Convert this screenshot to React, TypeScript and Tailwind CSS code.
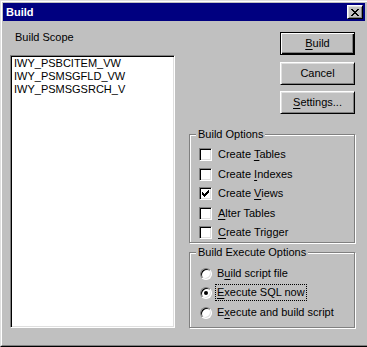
import React from 'react';

const sunken =
  'border border-t-[#808080] border-l-[#808080] border-b-white border-r-white shadow-[inset_1px_1px_0_#000,inset_-1px_-1px_0_#dfdfdf] bg-white';

const CheckMark = () => (
  <svg width="7" height="7" viewBox="0 0 7 7" shapeRendering="crispEdges">
    <path
      d="M6 0h1v1h-1zM5 1h2v1h-2zM0 2h1v1h-1zM4 2h3v1h-3zM0 3h2v1h-2zM3 3h3v1h-3zM0 4h5v1h-5zM1 5h3v1h-3zM2 6h1v1h-1z"
      fill="#000"
    />
  </svg>
);

const CloseGlyph = () => (
  <svg width="8" height="7" viewBox="0 0 8 7" shapeRendering="crispEdges">
    <path
      d="M0 0h2v1h-2zM6 0h2v1h-2zM1 1h2v1h-2zM5 1h2v1h-2zM2 2h4v1h-4zM3 3h2v1h-2zM2 4h4v1h-4zM1 5h2v1h-2zM5 5h2v1h-2zM0 6h2v1h-2zM6 6h2v1h-2z"
      fill="#000"
    />
  </svg>
);

// label with one underlined access key
const Acc = ({ pre = '', k, post = '' }: { pre?: string; k: string; post?: string }) => (
  <span className="whitespace-pre">
    {pre}
    <span className="underline underline-offset-[2px]">{k}</span>
    {post}
  </span>
);

const Button = ({ children, def = false, mt }: { children: React.ReactNode; def?: boolean; mt: string }) => (
  <div
    className={
      def
        ? `${mt} ml-[91px] w-[75px] h-[23px] flex items-center justify-center border border-black shadow-[inset_1px_1px_0_#fff,inset_-1px_-1px_0_#000,inset_-2px_-2px_0_#808080]`
        : `${mt} ml-[91px] w-[75px] h-[23px] flex items-center justify-center border border-t-white border-l-white border-b-black border-r-black shadow-[inset_1px_1px_0_#dfdfdf,inset_-1px_-1px_0_#808080]`
    }
  >
    {children}
  </div>
);

const checks = [
  { pre: 'Create ', k: 'T', post: 'ables', on: false, mt: 'mt-0' },
  { pre: 'Create ', k: 'I', post: 'ndexes', on: false, mt: 'mt-[7px]' },
  { pre: 'Create ', k: 'V', post: 'iews', on: true, mt: 'mt-[6px]' },
  { pre: '', k: 'A', post: 'lter Tables', on: false, mt: 'mt-[7px]' },
  { pre: '', k: 'C', post: 'reate Trigger', on: false, mt: 'mt-[6px]' },
];

const radios = [
  { pre: 'B', k: 'u', post: 'ild script file', on: false, mt: 'mt-0' },
  { pre: '', k: 'E', post: 'xecute SQL now', on: true, mt: 'mt-[6px]' },
  { pre: 'E', k: 'x', post: 'ecute and build script', on: false, mt: 'mt-[7px]' },
];

export default function App() {
  return (
    <div className="w-[367px] h-[347px] bg-[#c0c0c0] border-t border-l border-b border-t-[#dfdfdf] border-l-[#dfdfdf] border-b-black font-['Liberation_Sans',Arial,sans-serif] text-[11px] leading-[13px] text-black select-none">
      <div className="h-full flex flex-col border-t border-l border-b border-t-white border-l-white border-b-[#808080] pt-[1px] pl-[1px] pr-[2px]">
        {/* title bar */}
        <div className="h-[18px] bg-[#000080] flex items-center justify-between pl-[3px] pr-[2px]">
          <span className="text-white font-bold">Build</span>
          <div className="w-[16px] h-[14px] flex items-center justify-center bg-[#c0c0c0] border border-t-white border-l-white border-b-black border-r-black shadow-[inset_1px_1px_0_#dfdfdf,inset_-1px_-1px_0_#808080]">
            <CloseGlyph />
          </div>
        </div>

        <div className="flex">
          {/* build scope */}
          <div className="ml-[7px] w-[165px]">
            <div className="mt-[10px] pl-[5px]">Build Scope</div>
            <div className={`mt-[11px] h-[273px] pt-[1px] pl-[3px] ${sunken}`}>
              <div>IWY_PSBCITEM_VW</div>
              <div>IWY_PSMSGFLD_VW</div>
              <div>IWY_PSMSGSRCH_V</div>
            </div>
          </div>

          <div className="ml-[14px] w-[167px]">
            <Button def mt="mt-[11px]">
              <Acc k="B" post="uild" />
            </Button>
            <Button mt="mt-[7px]">Cancel</Button>
            <Button mt="mt-[6px]">
              <Acc k="S" post="ettings..." />
            </Button>

            <div className="relative mt-[20px] w-[166px] h-[109px] border border-[#808080] shadow-[inset_1px_1px_0_#fff,1px_1px_0_#fff] pt-[13px]">
              <span className="absolute top-[-7px] left-[6px] px-[2px] bg-[#c0c0c0]">Build Options</span>
              {checks.map((c) => (
                <div key={c.post} className={`${c.mt} h-[13px] flex items-center pl-[9px]`}>
                  <div className={`w-[13px] h-[13px] flex items-center justify-center ${sunken}`}>
                    {c.on && <CheckMark />}
                  </div>
                  <span className="ml-[6px]">
                    <Acc pre={c.pre} k={c.k} post={c.post} />
                  </span>
                </div>
              ))}
            </div>

            <div className="relative mt-[9px] w-[166px] h-[76px] border border-[#808080] shadow-[inset_1px_1px_0_#fff,1px_1px_0_#fff] pt-[14px]">
              <span className="absolute top-[-7px] left-[6px] px-[2px] bg-[#c0c0c0]">Build Execute Options</span>
              {radios.map((r) => (
                <div key={r.post} className={`${r.mt} h-[13px] flex items-center pl-[10px]`}>
                  <div className={`w-[12px] h-[12px] rounded-full flex items-center justify-center ${sunken}`}>
                    {r.on && <div className="w-[4px] h-[4px] rounded-full bg-black" />}
                  </div>
                  <span
                    className={
                      r.on
                        ? 'ml-[5px] outline outline-1 outline-dotted outline-black outline-offset-[1px]'
                        : 'ml-[5px]'
                    }
                  >
                    <Acc pre={r.pre} k={r.k} post={r.post} />
                  </span>
                </div>
              ))}
            </div>
          </div>
        </div>
      </div>
    </div>
  );
}
